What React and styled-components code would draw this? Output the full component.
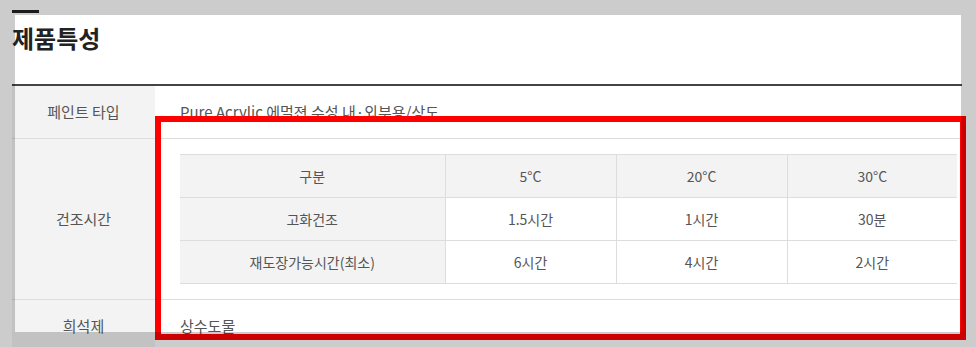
import styled, { createGlobalStyle } from "styled-components";

const GlobalStyle = createGlobalStyle`
  html, body {
    margin: 0;
    padding: 0;
    background: #ffffff;
  }
  body {
    font-family: "Noto Sans CJK KR", "Noto Sans", sans-serif;
    color: #555555;
    overflow: hidden;
  }
`;

const temps = ["5°C", "20°C", "30°C"];
const dryRows = [
  { label: "고화건조", values: ["1.5시간", "1시간", "30분"] },
  { label: "재도장가능시간(최소)", values: ["6시간", "4시간", "2시간"] },
];

export default function App() {
  return (
    <>
      <GlobalStyle />
      <Page>
        <Section>
          <TitleBar />
          <Title>제품특성</Title>
          <SpecTable>
            <tbody>
              <tr>
                <SpecHead>페인트 타입</SpecHead>
                <SpecCell>Pure Acrylic 에멀젼 수성 내·외부용/상도</SpecCell>
              </tr>
              <tr>
                <SpecHead>건조시간</SpecHead>
                <SpecCell $nested>
                  <DryTable>
                    <colgroup>
                      <col style={{ width: 265 }} />
                      <col style={{ width: 171 }} />
                      <col style={{ width: 171 }} />
                      <col />
                    </colgroup>
                    <tbody>
                      <tr>
                        <DryCell $gray>구분</DryCell>
                        {temps.map((t) => (
                          <DryCell $gray key={t}>
                            {t}
                          </DryCell>
                        ))}
                      </tr>
                      {dryRows.map((row) => (
                        <tr key={row.label}>
                          <DryCell $gray>{row.label}</DryCell>
                          {row.values.map((v, i) => (
                            <DryCell key={i}>{v}</DryCell>
                          ))}
                        </tr>
                      ))}
                    </tbody>
                  </DryTable>
                </SpecCell>
              </tr>
              <tr>
                <SpecHead>희석제</SpecHead>
                <SpecCell>상수도물</SpecCell>
              </tr>
            </tbody>
          </SpecTable>
        </Section>
        <Highlight />
        <Spotlight />
      </Page>
    </>
  );
}

const Page = styled.div`
  position: relative;
  width: 976px;
  height: 347px;
  overflow: hidden;
`;

const Section = styled.div`
  width: 950px;
  padding: 10px 0 0 12px;
`;

const TitleBar = styled.div`
  width: 27px;
  height: 3px;
  background: #222222;
`;

const Title = styled.h2`
  margin: 9px 0 31px;
  font-size: 24px;
  line-height: 31px;
  font-weight: 700;
  color: #222222;
`;

const SpecTable = styled.table`
  width: 100%;
  border-collapse: collapse;
  border-top: 2px solid #444444;
  font-size: 15px;
  line-height: 22px;
`;

const SpecHead = styled.th`
  width: 143px;
  padding: 15px 0;
  background: #f3f3f3;
  font-weight: 400;
  text-align: center;
  color: #555555;
  border-bottom: 1px solid #dddddd;
`;

const SpecCell = styled.td`
  padding: ${(p) => (p.$nested ? "15px 5px 15px 25px" : "15px 25px")};
  text-align: left;
  color: #555555;
  border-bottom: 1px solid #dddddd;
`;

const DryTable = styled.table`
  width: 100%;
  table-layout: fixed;
  border-collapse: collapse;
  border-top: 1px solid #dddddd;
  font-size: 14px;
`;

const DryCell = styled.td`
  height: 22px;
  padding: 10px 0;
  text-align: center;
  background: ${(p) => (p.$gray ? "#f3f3f3" : "#ffffff")};
  border-bottom: 1px solid #dddddd;
  border-left: 1px solid #dddddd;
  &:first-child {
    border-left: none;
  }
`;

/* annotation: red box drawn over the content */
const Highlight = styled.div`
  position: absolute;
  left: 155px;
  top: 116px;
  width: 811px;
  height: 224px;
  box-sizing: border-box;
  border: 6px solid #ff0000;
`;

/* everything outside this window is dimmed */
const Spotlight = styled.div`
  position: absolute;
  left: 15px;
  top: 15px;
  width: 946px;
  height: 317px;
  box-shadow: 0 0 0 2000px rgba(0, 0, 0, 0.2);
  pointer-events: none;
`;
